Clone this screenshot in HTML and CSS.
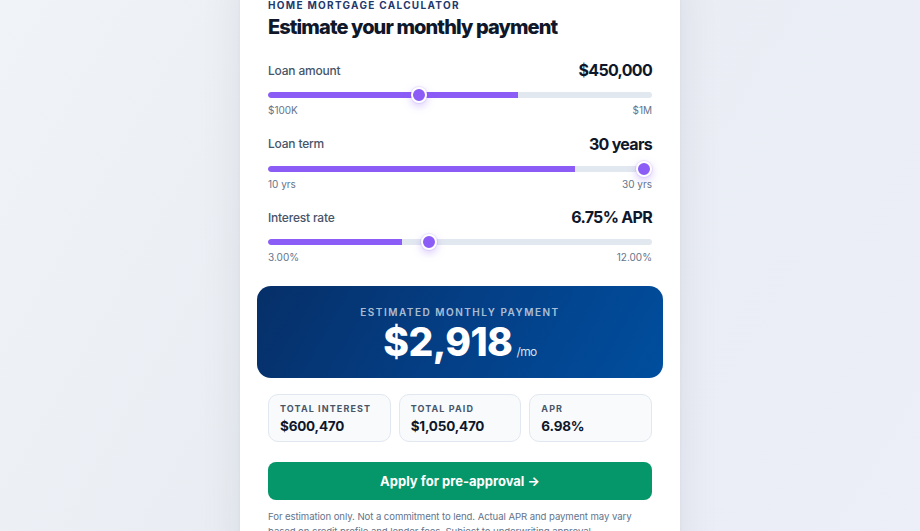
FILE: index.html
```html
<!DOCTYPE html>
<html lang="en">
<head>
<meta charset="utf-8">
<title>Home Mortgage Calculator</title>
<link rel="stylesheet" href="styles.css">
</head>
<body>
<main class="card">
  <div class="eyebrow">Home Mortgage Calculator</div>
  <h1 class="title">Estimate your monthly payment</h1>

  <section class="sliders">
    <div class="group">
      <div class="row"><span class="label">Loan amount</span><span class="value">$450,000</span></div>
      <div class="track-wrap">
        <div class="track"><div class="fill" style="width:65%"></div></div>
        <div class="thumb" style="left:calc(8px + 0.3889 * (100% - 16px))"></div>
      </div>
      <div class="range"><span>$100K</span><span>$1M</span></div>
    </div>
    <div class="group">
      <div class="row"><span class="label">Loan term</span><span class="value">30 years</span></div>
      <div class="track-wrap">
        <div class="track"><div class="fill" style="width:80%"></div></div>
        <div class="thumb" style="left:calc(8px + 1 * (100% - 16px))"></div>
      </div>
      <div class="range"><span>10 yrs</span><span>30 yrs</span></div>
    </div>
    <div class="group">
      <div class="row"><span class="label">Interest rate</span><span class="value">6.75% APR</span></div>
      <div class="track-wrap">
        <div class="track"><div class="fill" style="width:35%"></div></div>
        <div class="thumb" style="left:calc(8px + 0.4167 * (100% - 16px))"></div>
      </div>
      <div class="range"><span>3.00%</span><span>12.00%</span></div>
    </div>
  </section>

  <section class="payment">
    <div class="payment-label">Estimated Monthly Payment</div>
    <div class="payment-value"><span class="amount">$2,918</span><span class="per">/mo</span></div>
  </section>

  <section class="stats">
    <div class="stat"><div class="stat-label">Total Interest</div><div class="stat-value">$600,470</div></div>
    <div class="stat"><div class="stat-label">Total Paid</div><div class="stat-value">$1,050,470</div></div>
    <div class="stat"><div class="stat-label">APR</div><div class="stat-value">6.98%</div></div>
  </section>

  <button class="cta" type="button">Apply for pre-approval →</button>

  <p class="disclaimer">For estimation only. Not a commitment to lend. Actual APR and payment may vary based on credit profile and lender fees. Subject to underwriting approval.</p>
</main>
</body>
</html>
```

FILE: styles.css
```css
* { box-sizing: border-box; }

html, body { height: 100%; }

body {
  margin: 0;
  height: 100vh;
  overflow: hidden;
  display: flex;
  align-items: center;
  justify-content: center;
  font-family: Inter, "Noto Sans", "Liberation Sans", sans-serif;
  background: linear-gradient(120deg, #f0f3f7 0%, #e9edf3 45%, #eceef8 100%);
  color: #0f172a;
}

.card {
  flex-shrink: 0;
  width: 440px;
  padding: 30px 28px 24px;
  background: #ffffff;
  box-shadow: 0 10px 40px rgba(15, 23, 42, 0.08), 0 1px 3px rgba(15, 23, 42, 0.05);
}

.eyebrow {
  font-size: 10px;
  line-height: 14px;
  font-weight: 700;
  letter-spacing: 1.3px;
  text-transform: uppercase;
  color: #1e3a6d;
}

.title {
  margin: 2px 0 0;
  font-size: 20px;
  line-height: 26px;
  font-weight: 800;
  letter-spacing: -0.9px;
  color: #0f172a;
}

.sliders {
  margin-top: 20px;
  display: flex;
  flex-direction: column;
  gap: 16.5px;
}

.row {
  display: flex;
  justify-content: space-between;
  align-items: center;
  height: 20px;
}

.label {
  font-size: 12px;
  font-weight: 500;
  letter-spacing: -0.2px;
  color: #475569;
}

.value {
  font-size: 16px;
  font-weight: 700;
  letter-spacing: -0.7px;
  color: #0f172a;
}

.track-wrap {
  position: relative;
  margin-top: 7px;
  height: 16px;
  display: flex;
  align-items: center;
}

.track {
  width: 100%;
  height: 6px;
  border-radius: 3px;
  background: #e2e8f0;
  overflow: hidden;
}

.fill {
  height: 100%;
  background: #8b5cf6;
  border-radius: 3px 0 0 3px;
}

.thumb {
  position: absolute;
  top: 0;
  width: 16px;
  height: 16px;
  margin-left: -8px;
  border-radius: 50%;
  background: #8b5cf6;
  border: 2px solid #ffffff;
  box-shadow: 0 0 0 1px rgba(139, 92, 246, 0.12), 0 3px 8px rgba(139, 92, 246, 0.35);
}

.range {
  display: flex;
  justify-content: space-between;
  font-size: 10px;
  line-height: 14px;
  color: #64748b;
}

.payment {
  margin: 22px -11px 0;
  padding: 19px 20px 14px;
  border-radius: 14px;
  background: linear-gradient(120deg, #062f68 0%, #043f86 50%, #004e9e 100%);
  text-align: center;
  color: #ffffff;
}

.payment-label {
  font-size: 10px;
  line-height: 14px;
  font-weight: 600;
  letter-spacing: 1.5px;
  text-transform: uppercase;
  color: rgba(255, 255, 255, 0.68);
}

.payment-value {
  margin-top: 1px;
  line-height: 44px;
  height: 44px;
}

.amount {
  font-size: 39px;
  font-weight: 800;
  letter-spacing: -0.6px;
}

.per {
  margin-left: 4px;
  font-size: 12px;
  font-weight: 400;
  letter-spacing: -0.6px;
  color: rgba(255, 255, 255, 0.85);
}

.stats {
  margin-top: 16px;
  display: grid;
  grid-template-columns: repeat(3, 1fr);
  gap: 8px;
}

.stat {
  padding: 8px 11px 6px;
  border: 1px solid #e2e8f0;
  border-radius: 10px;
  background: #f8fafc;
}

.stat-label {
  font-size: 9px;
  line-height: 12px;
  font-weight: 700;
  letter-spacing: 1.1px;
  text-transform: uppercase;
  color: #475569;
  white-space: nowrap;
}

.stat-value {
  margin-top: 2px;
  font-size: 13.5px;
  line-height: 18px;
  font-weight: 700;
  letter-spacing: -0.2px;
  color: #0f172a;
}

.cta {
  display: block;
  width: 100%;
  height: 38px;
  margin-top: 20px;
  border: 0;
  border-radius: 8px;
  background: #059669;
  color: #ffffff;
  font-family: inherit;
  font-size: 13px;
  font-weight: 700;
  cursor: pointer;
}

.disclaimer {
  margin: 9px 0 0;
  font-size: 9.6px;
  line-height: 15px;
  letter-spacing: -0.08px;
  color: #64748b;
}
```
